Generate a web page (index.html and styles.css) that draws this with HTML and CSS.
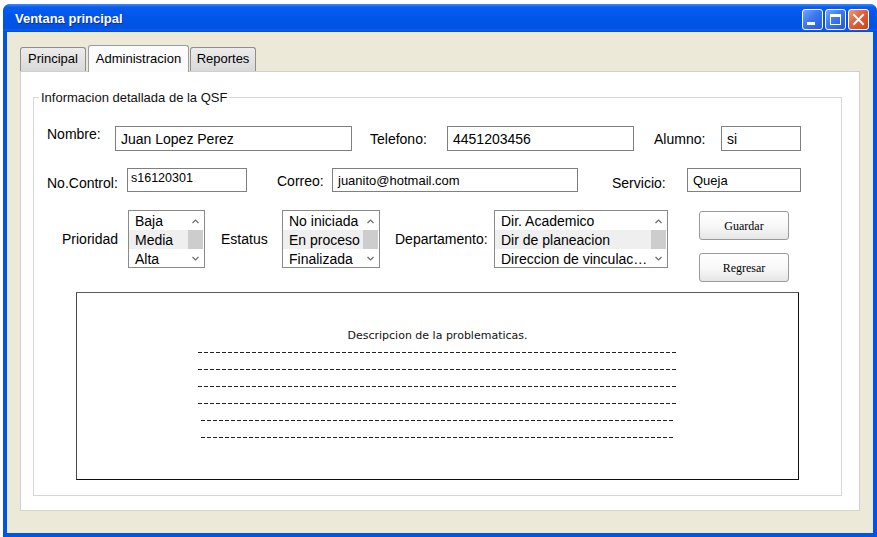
FILE: index.html
```html
<!DOCTYPE html>
<html lang="es">
<head>
<meta charset="utf-8">
<title>Ventana principal</title>
<link rel="stylesheet" href="styles.css">
</head>
<body>
<div class="window">
  <div class="titlebar">
    <span class="title">Ventana principal</span>
    <div class="controls">
      <span class="ctl"><svg width="19" height="19" viewBox="0 0 19 19"><rect x="4" y="12" width="8" height="3" fill="#fff"/></svg></span>
      <span class="ctl"><svg width="19" height="19" viewBox="0 0 19 19"><rect x="4.5" y="4.5" width="10" height="10" fill="none" stroke="#fff" stroke-width="1"/><rect x="4" y="4" width="11" height="3" fill="#fff"/></svg></span>
      <span class="ctl close"><svg width="19" height="19" viewBox="0 0 19 19"><path d="M5 5 L14 14 M14 5 L5 14" stroke="#fff" stroke-width="2" stroke-linecap="square"/></svg></span>
    </div>
  </div>
  <div class="client">
    <div class="tabs">
      <div class="tab t-principal">Principal</div>
      <div class="tab t-admin active">Administracion</div>
      <div class="tab t-reportes">Reportes</div>
    </div>
    <div class="panel">
      <fieldset class="group">
        <legend>Informacion detallada de la QSF</legend>

        <div class="row r1">
          <span class="lbl l-nombre">Nombre:</span>
          <div class="field f14 w-nombre">Juan Lopez Perez</div>
          <span class="lbl l-tel">Telefono:</span>
          <div class="field f14 w-tel">4451203456</div>
          <span class="lbl l-alumno">Alumno:</span>
          <div class="field f14 w-alumno">si</div>
        </div>

        <div class="row r2">
          <span class="lbl l-control">No.Control:</span>
          <div class="field f13 top w-control">s16120301</div>
          <span class="lbl l-correo">Correo:</span>
          <div class="field f13 w-correo">juanito@hotmail.com</div>
          <span class="lbl l-servicio">Servicio:</span>
          <div class="field f13 w-servicio">Queja</div>
        </div>

        <div class="row r3">
          <span class="lbl3 l-prio">Prioridad</span>
          <div class="list w-prio">
            <div class="items">
              <div class="item">Baja</div>
              <div class="item sel">Media</div>
              <div class="item">Alta</div>
            </div>
            <div class="sbar">
              <span class="arr"><svg width="7" height="5" viewBox="0 0 7 5"><polyline points="0.5,4 3.5,1 6.5,4" fill="none" stroke="#6b6b6b" stroke-width="1.2"/></svg></span>
              <span class="thumb"></span>
              <span class="arr"><svg width="7" height="5" viewBox="0 0 7 5"><polyline points="0.5,1 3.5,4 6.5,1" fill="none" stroke="#6b6b6b" stroke-width="1.2"/></svg></span>
            </div>
          </div>
          <span class="lbl3 l-estatus">Estatus</span>
          <div class="list w-estatus">
            <div class="items">
              <div class="item">No iniciada</div>
              <div class="item sel">En proceso</div>
              <div class="item">Finalizada</div>
            </div>
            <div class="sbar">
              <span class="arr"><svg width="7" height="5" viewBox="0 0 7 5"><polyline points="0.5,4 3.5,1 6.5,4" fill="none" stroke="#6b6b6b" stroke-width="1.2"/></svg></span>
              <span class="thumb"></span>
              <span class="arr"><svg width="7" height="5" viewBox="0 0 7 5"><polyline points="0.5,1 3.5,4 6.5,1" fill="none" stroke="#6b6b6b" stroke-width="1.2"/></svg></span>
            </div>
          </div>
          <span class="lbl3 l-depto">Departamento:</span>
          <div class="list w-depto">
            <div class="items">
              <div class="item">Dir. Academico</div>
              <div class="item sel">Dir de planeacion</div>
              <div class="item">Direccion de vinculacion</div>
            </div>
            <div class="sbar">
              <span class="arr"><svg width="7" height="5" viewBox="0 0 7 5"><polyline points="0.5,4 3.5,1 6.5,4" fill="none" stroke="#6b6b6b" stroke-width="1.2"/></svg></span>
              <span class="thumb"></span>
              <span class="arr"><svg width="7" height="5" viewBox="0 0 7 5"><polyline points="0.5,1 3.5,4 6.5,1" fill="none" stroke="#6b6b6b" stroke-width="1.2"/></svg></span>
            </div>
          </div>
          <div class="btns">
            <button class="btn">Guardar</button>
            <button class="btn">Regresar</button>
          </div>
        </div>

        <div class="desc">
          <p class="desc-title">Descripcion de la problematicas.</p>
          <div class="dash"></div>
          <div class="dash"></div>
          <div class="dash"></div>
          <div class="dash"></div>
          <div class="dash short"></div>
          <div class="dash short"></div>
        </div>
      </fieldset>
    </div>
  </div>
</div>
</body>
</html>
```
FILE: styles.css
```css
* { box-sizing: border-box; }

html, body {
  margin: 0;
  padding: 0;
  background: #ffffff;
}

body {
  font-family: "Liberation Sans", Arial, sans-serif;
  color: #000;
}

.window {
  margin: 4px 0 0 3px;
  width: 874px;
  height: 533px;
  background: #0055e5;
  border-radius: 7px 7px 0 0;
  display: flex;
  flex-direction: column;
  overflow: hidden;
}

.titlebar {
  height: 28px;
  flex: none;
  display: flex;
  align-items: center;
  justify-content: space-between;
  padding: 0 8px 0 12px;
  background: linear-gradient(to bottom, #3d8ef8 0px, #0a5ff0 3px, #0058ee 8px, #0055e8 50%, #0053e2 85%, #0a5cf0 94%, #0048d4 100%);
}

.title {
  color: #ffffff;
  font-weight: bold;
  font-size: 13px;
  text-shadow: 1px 1px 0 #0a2ea8;
}

.controls {
  display: flex;
  gap: 2px;
  padding-top: 2px;
}

.ctl {
  width: 21px;
  height: 21px;
  border: 1px solid #ffffff;
  border-radius: 3px;
  background: linear-gradient(135deg, #76a6fb 0%, #3b78f0 45%, #2459e0 100%);
  display: flex;
  align-items: center;
  justify-content: center;
}

.ctl.close {
  background: linear-gradient(135deg, #f09a7c 0%, #e2603a 45%, #cc4319 100%);
}

.client {
  flex: 1;
  margin: 0 4px 4px 4px;
  background: #ece9d8;
  padding: 13px 13px 22px 13px;
  display: flex;
  flex-direction: column;
}

.tabs {
  display: flex;
  align-items: flex-end;
  height: 26px;
  flex: none;
}

.tab {
  height: 24px;
  font-size: 13px;
  line-height: 22px;
  text-align: center;
  border: 1px solid #8d8d8d;
  border-bottom: none;
  border-radius: 3px 3px 0 0;
  background: linear-gradient(to bottom, #ececec, #d9d9d9);
  color: #000;
}

.t-principal { width: 66px; margin-right: 2px; }
.t-admin { width: 101px; margin-right: 1px; }
.t-reportes { width: 66px; }

.tab.active {
  height: 27px;
  line-height: 25px;
  margin-bottom: -1px;
  background: #fbfbfb;
  border-color: #9c9c9c;
  position: relative;
  z-index: 1;
}

.panel {
  height: 440px;
  flex: none;
  background: #ffffff;
  border: 1px solid #cfcfcf;
  border-bottom-color: #d2d2d2;
  padding: 18px 17px 15px 12px;
}

.group {
  margin: 0;
  padding: 0 0 15px 0;
  border: 1px solid #d8d8d8;
  min-width: 0;
}

.group legend {
  font-size: 13px;
  line-height: 15px;
  margin-left: 5px;
  padding: 0 2px;
  color: #111;
}

.row {
  display: flex;
  align-items: flex-start;
  padding-left: 13px;
}

.r1 { margin-top: 21px; height: 25px; }
.r2 { margin-top: 17px; height: 24px; }
.r3 { margin-top: 18px; height: 72px; padding-left: 28px; }

.lbl {
  font-size: 14px;
  line-height: 16px;
  white-space: nowrap;
}

.l-nombre { width: 68px; margin-top: 0; }
.l-tel { width: 77px; margin-left: 18px; margin-top: 5px; }
.l-alumno { width: 67px; margin-left: 20px; margin-top: 5px; }
.l-control { width: 80px; margin-top: 7px; }
.l-correo { width: 55px; margin-left: 30px; margin-top: 5px; }
.l-servicio { width: 75px; margin-left: 34px; margin-top: 7px; }

.field {
  height: 100%;
  border: 1px solid #7f7f7f;
  background: #ffffff;
  display: flex;
  align-items: center;
  padding-left: 5px;
  white-space: nowrap;
  overflow: hidden;
}

.f14 { font-size: 14px; }
.f13 { font-size: 13px; }
.field.top { align-items: flex-start; padding-top: 2px; padding-left: 3px; font-size: 12.5px; }

.w-nombre { width: 237px; }
.w-tel { width: 187px; }
.w-alumno { width: 80px; }
.w-control { width: 120px; }
.w-correo { width: 246px; }
.w-servicio { width: 114px; }

.lbl3 {
  font-size: 14px;
  height: 58px;
  display: flex;
  align-items: center;
  white-space: nowrap;
}

.l-prio { width: 66px; }
.l-estatus { width: 61px; margin-left: 16px; }
.l-depto { width: 99px; margin-left: 15px; }

.list {
  height: 58px;
  border: 1px solid #8a8a8a;
  background: #ffffff;
  display: flex;
}

.w-prio { width: 77px; }
.w-estatus { width: 98px; }
.w-depto { width: 174px; }

.items {
  flex: 1;
  min-width: 0;
  overflow: hidden;
}

.item {
  height: 19px;
  line-height: 20px;
  font-size: 14px;
  padding: 0 3px 0 6px;
  white-space: nowrap;
  overflow: hidden;
  text-overflow: ellipsis;
}

.item.sel { background: #efefef; }

.sbar {
  width: 16px;
  flex: none;
  display: flex;
  flex-direction: column;
  padding-right: 1px;
}

.arr {
  height: 19px;
  padding-top: 1px;
  display: flex;
  align-items: center;
  justify-content: center;
}

.arr:last-child { height: 18px; }

.thumb {
  height: 19px;
  background: #cdcdcd;
}

.btns {
  margin-left: 31px;
  padding-top: 1px;
  display: flex;
  flex-direction: column;
  gap: 13px;
}

.btn {
  width: 90px;
  height: 29px;
  padding: 1px 0 0 0;
  border: 1px solid #9a9a9a;
  border-radius: 3px;
  background: linear-gradient(to bottom, #ffffff 0%, #f7f7f7 55%, #e6e6e6 100%);
  font-family: "Liberation Serif", "Times New Roman", serif;
  font-size: 12px;
  color: #000;
}

.desc {
  margin: 10px 0 0 42px;
  width: 723px;
  height: 188px;
  border: 1px solid #111;
  border-top-color: #5a5a5a;
  border-left-color: #4a4a4a;
  background: #ffffff;
  display: flex;
  flex-direction: column;
  align-items: center;
  padding-top: 36px;
}

.desc-title {
  margin: 0 0 9px 0;
  font-family: "DejaVu Sans", sans-serif;
  font-size: 11px;
  line-height: 14px;
  color: #111;
}

.dash {
  width: 480px;
  height: 1px;
  flex: none;
  margin-bottom: 16px;
  background: repeating-linear-gradient(to right, #222 0px, #222 4px, transparent 4px, transparent 6px);
}

.dash.short { width: 474px; }
```
